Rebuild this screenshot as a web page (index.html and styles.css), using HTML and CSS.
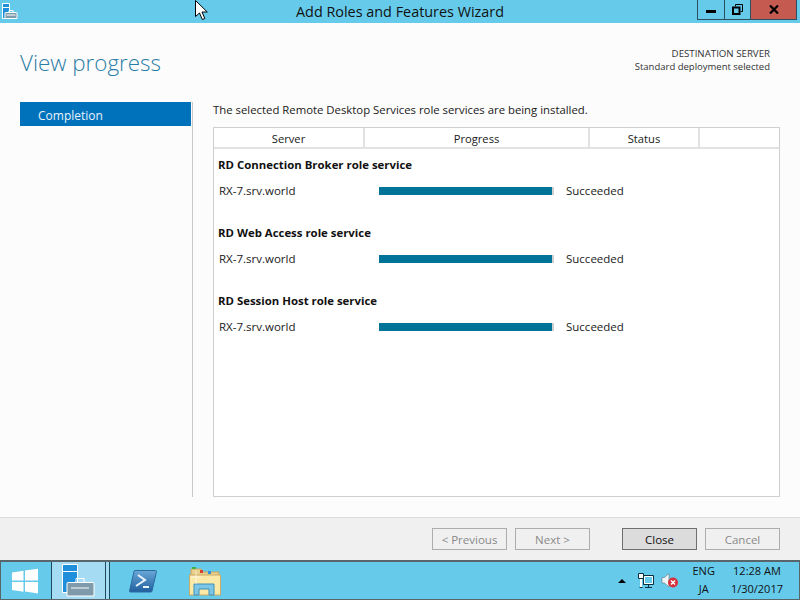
FILE: index.html
```html
<!DOCTYPE html>
<html>
  <head>
    <title>Add Roles and Features Wizard</title>
    <meta http-equiv="Content-Type" content="text/html; charset=UTF-8"/>
    <link rel="stylesheet" href="styles.css">
  </head>
  <body>
    <div class="titlebar">
      <svg class="app-icon" width="18" height="20" viewBox="0 0 18 20">
        <path d="M2.500 3.500h7v15h-7z" fill="#1f8fdc" stroke="#fff"/>
        <path d="M3 7.500h6" stroke="#fff"/>
        <path d="M5.500 12.500h11a.5.5 0 0 1 .5.500v5.500h-12v-5.500a.5.5 0 0 1 .5-.5z" fill="#7f9aab" stroke="#fff"/>
        <path d="M9 12v-1.500h4v1.500" fill="none" stroke="#fff"/>
        <path d="M6.500 15h9" stroke="#fff"/>
      </svg>
      <div class="title">Add Roles and Features Wizard</div>
      <div class="controls">
        <div class="ctl"><span class="min-glyph"></span></div>
        <div class="ctl">
          <svg width="11" height="11" viewBox="0 0 11 11"><path d="M3.500 2.500v-2h7v7h-2" fill="none" stroke="#000"/><path d="M1 3.500h6.500v6.500h-6.500z" fill="none" stroke="#000" stroke-width="2"/></svg>
        </div>
        <div class="ctl ctl-close">
          <svg width="10" height="9" viewBox="0 0 10 9"><path d="M1 .5l8 8M9 .5l-8 8" stroke="#000" stroke-width="2.200"/></svg>
        </div>
      </div>
    </div>

    <div class="wizard">
      <div class="head">
        <h1>View progress</h1>
        <div class="dest">
          <div class="dest-top">DESTINATION SERVER</div>
          <div>Standard deployment selected</div>
        </div>
      </div>
      <div class="columns">
        <div class="nav">
          <div class="nav-item">Completion</div>
        </div>
        <div class="content">
          <p class="intro">The selected Remote Desktop Services role services are being installed.</p>
          <div class="table">
            <div class="thead">
              <div class="th th-server">Server</div>
              <div class="th th-progress">Progress</div>
              <div class="th th-status">Status</div>
              <div class="th th-blank"></div>
            </div>
            <div class="group">
              <h3>RD Connection Broker role service</h3>
              <div class="row">
                <span class="host">RX-7.srv.world</span>
                <span class="bar"><span class="fill"></span></span>
                <span class="state">Succeeded</span>
              </div>
            </div>
            <div class="group">
              <h3>RD Web Access role service</h3>
              <div class="row">
                <span class="host">RX-7.srv.world</span>
                <span class="bar"><span class="fill"></span></span>
                <span class="state">Succeeded</span>
              </div>
            </div>
            <div class="group">
              <h3>RD Session Host role service</h3>
              <div class="row">
                <span class="host">RX-7.srv.world</span>
                <span class="bar"><span class="fill"></span></span>
                <span class="state">Succeeded</span>
              </div>
            </div>
          </div>
        </div>
      </div>
    </div>

    <div class="footer">
      <button class="btn btn-off">&lt; Previous</button>
      <button class="btn btn-off">Next &gt;</button>
      <button class="btn btn-main">Close</button>
      <button class="btn btn-off">Cancel</button>
    </div>

    <div class="taskbar">
      <div class="start">
        <svg width="28" height="26" viewBox="0 0 28 26">
          <path d="M1 4.500l11.500-1.700v9.700h-11.500zM14 2.600l13-1.900v11.800h-13zM1 14h11.500v9.700l-11.500-1.700zM14 14h13v11.500l-13-1.900z" fill="#fff"/>
        </svg>
      </div>
      <div class="tile">
        <svg width="34" height="34" viewBox="0 0 34 34">
          <path d="M.5.500h15v28h-15z" fill="#1f8fdc" stroke="#fff"/>
          <path d="M1 7.500h14" stroke="#fff"/>
          <path d="M6 18.500h25a1 1 0 0 1 1 1v12.500h-27v-12.500a1 1 0 0 1 1-1z" fill="#7f9aab" stroke="#fff"/>
          <path d="M14 18v-3.500h8v3.500" fill="none" stroke="#fff"/>
          <path d="M9 24h18" stroke="#fff"/>
        </svg>
      </div>
      <div class="pin pin-ps">
        <svg width="28" height="24" viewBox="0 0 28 24">
          <defs>
            <linearGradient id="psfill" x1="0" y1="0" x2="0" y2="1">
              <stop offset="0" stop-color="#6aa8d8"/>
              <stop offset="1" stop-color="#1f5f9e"/>
            </linearGradient>
          </defs>
          <path d="M6 1.500h20.500a1 1 0 0 1 1 1l-4.500 19.500a1 1 0 0 1-1 1h-20.500a1 1 0 0 1-1-1l4.500-19.500a1 1 0 0 1 1-1z" fill="url(#psfill)" stroke="#2c6a9e"/>
          <path d="M9 6l7 5-9 6" fill="none" stroke="#eaf4fb" stroke-width="2"/>
          <path d="M14 18h6" stroke="#eaf4fb" stroke-width="2"/>
        </svg>
      </div>
      <div class="pin pin-files">
        <svg width="32" height="30" viewBox="0 0 32 30">
          <path d="M2 3h10l2 3h16v6h-28z" fill="#e8cf8c" stroke="#c9a860"/>
          <path d="M3 1h4v2h-4z" fill="#37b34a"/>
          <path d="M11 4h3v3h-3z" fill="#d8412f"/>
          <path d="M19 5h3v3h-3z" fill="#2f8fdc"/>
          <path d="M.5 9h31v20h-31z" fill="#fbe9a8" stroke="#cbaa62"/>
          <path d="M5 29v-11h20v11h-5v-6h-10v6z" fill="#7cc6e8" stroke="#3f8fb8"/>
          <path d="M7 4v14M2 11h10" stroke="#fff" stroke-width=".8" opacity=".8"/>
        </svg>
      </div>
      <div class="tray">
        <span class="caret"></span>
        <svg class="tray-net" width="17" height="15" viewBox="0 0 17 15">
          <path d="M5.500 2.500h10v9h-10z" fill="#66cbeb" stroke="#0c2f3d"/>
          <path d="M6.500 3.500h8v7h-8z" fill="none" stroke="#fff"/>
          <path d="M10.500 12v2M7 14.500h7" stroke="#0c2f3d"/>
          <path d="M.5.500h5v5h-5z" fill="#fff" stroke="#0c2f3d"/>
          <path d="M3 6v8" stroke="#fff" stroke-width="2"/>
          <path d="M1.500 14.500h3" stroke="#0c2f3d"/>
        </svg>
        <svg class="tray-snd" width="17" height="15" viewBox="0 0 17 15">
          <path d="M1 4.500h2.500l4.500-4v13.500l-4.500-4h-2.500z" fill="#f2f6f8" stroke="#61727c" stroke-width=".6"/>
          <circle cx="12" cy="9.500" r="5" fill="#d5323c"/>
          <path d="M10 7.500l4 4M14 7.500l-4 4" stroke="#fff" stroke-width="1.500"/>
        </svg>
        <div class="lang">
          <div>ENG</div>
          <div>JA</div>
        </div>
        <div class="clock">
          <div>12:28 AM</div>
          <div>1/30/2017</div>
        </div>
      </div>
    </div>

    <svg class="cursor" width="13" height="21" viewBox="0 0 13 21">
      <path d="M.5.500v16l4-3.500 2.800 6.500 2.500-1-2.800-6.500h5.300z" fill="#fff" stroke="#000"/>
    </svg>
  </body>
</html>
```

FILE: styles.css
```css
html, body {
  margin: 0;
  height: 600px;
  overflow: hidden;
}
body {
  display: flex;
  flex-direction: column;
  font-family: 'Open Sans', 'Noto Sans', sans-serif;
  font-size: 11.500px;
  color: #1a1a1a;
  background-color: #fcfcfc;
}

.titlebar {
  position: relative;
  display: flex;
  justify-content: center;
  height: 23px;
  background-color: #66cbeb;
}
.app-icon {
  position: absolute;
  left: 0;
  top: 0;
}
.title {
  font-size: 14.400px;
  line-height: 24px;
  color: #111;
}
.controls {
  position: absolute;
  top: 0;
  right: 3px;
  display: flex;
  height: 19px;
}
.ctl {
  display: flex;
  align-items: center;
  justify-content: center;
  width: 26px;
  border: 1px solid #2b4f60;
  border-top: 0;
  border-left: 0;
  box-sizing: border-box;
  height: 20px;
}
.ctl:first-child {
  width: 28px;
  border-left: 1px solid #2b4f60;
}
.ctl-close {
  width: 46px;
  background-color: #c45a50;
}
.min-glyph {
  display: block;
  width: 10px;
  height: 3px;
  margin-top: 3px;
  background-color: #000;
}

.wizard {
  flex: 1;
  display: flex;
  flex-direction: column;
  padding: 0 20px 20px;
}
.head {
  display: flex;
  justify-content: space-between;
  height: 79px;
}
h1 {
  margin: 25px 0 0;
  font-size: 22.400px;
  font-weight: 300;
  line-height: 30px;
  color: #2a7da5;
}
.dest {
  margin: 24px 10px 0 0;
  font-size: 9.500px;
  line-height: 13px;
  text-align: right;
  color: #333;
}
.dest-top {
  font-size: 9.700px;
}

.columns {
  flex: 1;
  display: flex;
}
.nav {
  width: 172px;
  border-right: 1px solid #c8c8c8;
}
.nav-item {
  height: 24px;
  margin-right: 1px;
  padding-left: 18px;
  font-size: 12px;
  line-height: 28px;
  color: #e8f2fa;
  background-color: #0072bc;
}
.content {
  flex: 1;
  display: flex;
  flex-direction: column;
  margin-left: 20px;
}
.intro {
  margin: 0;
  height: 25px;
  font-size: 11.350px;
  line-height: 15px;
}
.table {
  flex: 1;
  border: 1px solid #cfcfcf;
  background-color: #fff;
}
.thead {
  display: flex;
  height: 19px;
  border-bottom: 2px solid #e2e2e2;
}
.th {
  box-sizing: border-box;
  border-right: 2px solid #e2e2e2;
  font-size: 11.200px;
  text-align: center;
  line-height: 22px;
}
.th-server { width: 151px; }
.th-progress { width: 225px; }
.th-status { width: 110px; }
.th-blank { width: 79px; border-right: 0; }

.group {
  height: 68px;
  padding-left: 4px;
}
h3 {
  margin: 0;
  padding-top: 8px;
  font-size: 11.400px;
  font-weight: 700;
  line-height: 16px;
  color: #111;
}
.row {
  display: flex;
  align-items: center;
  margin-top: 10px;
  height: 16px;
}
.host {
  width: 161px;
  margin-bottom: 2px;
  padding-left: 1px;
  box-sizing: border-box;
}
.bar {
  display: block;
  width: 175px;
  height: 8px;
  background-color: #d0d0d0;
}
.fill {
  display: block;
  width: 173px;
  height: 8px;
  background-color: #007399;
}
.state {
  margin-left: 12px;
  margin-bottom: 2px;
}

.footer {
  display: flex;
  align-items: flex-start;
  box-sizing: border-box;
  height: 43px;
  padding: 10px 20px 0 432px;
  border-top: 1px solid #dcdcdc;
  background-color: #f0f0f0;
}
.btn {
  width: 75px;
  height: 22px;
  margin: 0 8px 0 0;
  padding: 0;
  border: 1px solid #adadad;
  font-family: inherit;
  font-size: 11.500px;
  color: #8a8a8a;
  background-color: #f0f0f0;
}
.btn:nth-child(2) { margin-right: 32px; }
.btn:last-child { margin-right: 0; }
.btn-main {
  border-color: #6f6f6f;
  color: #111;
  background-color: #dcdcdc;
}

.taskbar {
  display: flex;
  align-items: stretch;
  box-sizing: border-box;
  height: 40px;
  border: 1px solid #58666c;
  border-top-width: 2px;
  background-color: #66cbeb;
}
.start {
  display: flex;
  align-items: center;
  justify-content: center;
  width: 48px;
  padding-right: 2px;
}
.tile {
  box-sizing: border-box;
  width: 59px;
  padding: 2px 0 0 10px;
  border-left: 1px solid #1d4a5c;
  border-right: 1px solid #1d4a5c;
  background: linear-gradient(to right, #a5dcf3 53px, #1d4a5c 53px, #1d4a5c 54px, #a5dcf3 54px);
  overflow: hidden;
}
.pin {
  display: flex;
  align-items: center;
}
.pin-ps { margin-left: 19px; }
.pin-files { margin-left: 32px; }
.tray {
  flex: 1;
  display: flex;
  align-items: center;
  justify-content: flex-end;
  padding-right: 16px;
}
.caret {
  width: 0;
  height: 0;
  margin-right: 12px;
  border: 4px solid transparent;
  border-top: 0;
  border-bottom: 4px solid #000;
}
.tray-net { margin-right: 6px; }
.tray-snd { margin-right: 14px; }
.lang, .clock {
  margin-bottom: 2px;
  font-size: 11px;
  line-height: 18px;
  text-align: center;
  color: #111;
}
.clock { margin-left: 16px; }

.cursor {
  position: absolute;
  left: 195px;
  top: 0;
}
```
